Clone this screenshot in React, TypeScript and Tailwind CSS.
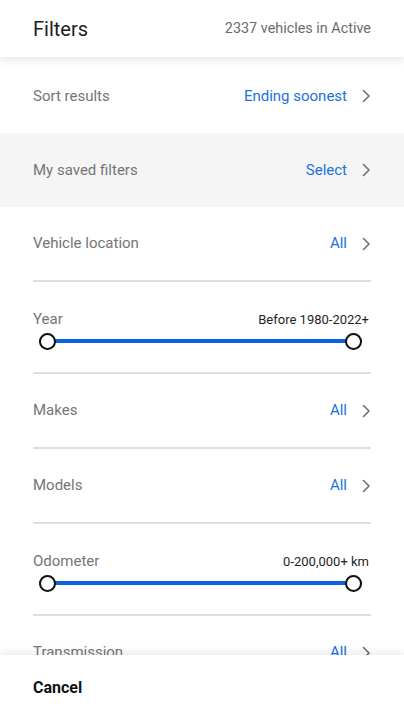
import React from "react";

function Chevron() {
  return (
    <svg width="9" height="14" viewBox="0 0 9 14" fill="none" className="shrink-0">
      <polyline points="1.5,1.5 7,7 1.5,12.5" stroke="#6f6f6f" strokeWidth="1.6" strokeLinecap="round" strokeLinejoin="round" />
    </svg>
  );
}

function NavRow({ label, value, divider = false, shaded = false }: { label: string; value: string; divider?: boolean; shaded?: boolean }) {
  return (
    <div className={shaded ? "bg-[#f5f5f5]" : "bg-white"}>
      <div className={`mx-[33px] flex items-center justify-between ${divider ? "h-[73px]" : "h-[74px]"}`}>
        <span className="text-[15px] text-[#757575]">{label}</span>
        <div className="flex items-center gap-[15px]">
          <span className="text-[15px] text-[#1b72dd]">{value}</span>
          <Chevron />
        </div>
      </div>
      {divider && <div className="mx-[33px] h-[2px] bg-[#dedede]" />}
    </div>
  );
}

function RangeRow({ label, value }: { label: string; value: string }) {
  return (
    <div className="bg-white">
      <div className="mx-[33px] h-[90px] flex flex-col pt-[26px]">
        <div className="flex items-center justify-between">
          <span className="text-[15px] text-[#757575]">{label}</span>
          <span className="text-[13px] text-[#1f1f1f] mr-[2px]">{value}</span>
        </div>
        <div className="relative mt-[2px] ml-[6px] mr-[9px] h-[17px] flex items-center">
          <div className="h-[4px] w-full bg-[#0a62e3]" />
          <div className="absolute left-0 top-0 w-[17px] h-[17px] rounded-full border-2 border-[#111] bg-white" />
          <div className="absolute right-0 top-0 w-[17px] h-[17px] rounded-full border-2 border-[#111] bg-white" />
        </div>
      </div>
      <div className="mx-[33px] h-[2px] bg-[#dedede]" />
    </div>
  );
}

export default function App() {
  return (
    <div className="w-[404px] h-[720px] flex flex-col bg-white overflow-hidden" style={{ fontFamily: "Roboto, 'Noto Sans', sans-serif" }}>
      {/* header */}
      <div className="relative z-10 h-[57px] shrink-0 px-[33px] flex items-center justify-between bg-white shadow-[0_3px_8px_rgba(0,0,0,0.10)]">
        <span className="text-[20px] text-[#202020]">Filters</span>
        <span className="text-[14.4px] text-[#6b6b6b]">2337 vehicles in Active</span>
      </div>

      {/* list */}
      <div className="flex-1 overflow-hidden">
        <div className="h-[2px]" />
        <NavRow label="Sort results" value="Ending soonest" />
        <NavRow label="My saved filters" value="Select" shaded />
        <NavRow label="Vehicle location" value="All" divider />
        <RangeRow label="Year" value="Before 1980-2022+" />
        <NavRow label="Makes" value="All" divider />
        <NavRow label="Models" value="All" divider />
        <RangeRow label="Odometer" value="0-200,000+ km" />
        <NavRow label="Transmission" value="All" divider />
      </div>

      {/* footer */}
      <div className="relative z-10 h-[65px] shrink-0 px-[33px] flex items-center bg-white shadow-[0_-3px_8px_rgba(0,0,0,0.08)]">
        <span className="text-[16px] font-bold text-[#111]">Cancel</span>
      </div>
    </div>
  );
}
